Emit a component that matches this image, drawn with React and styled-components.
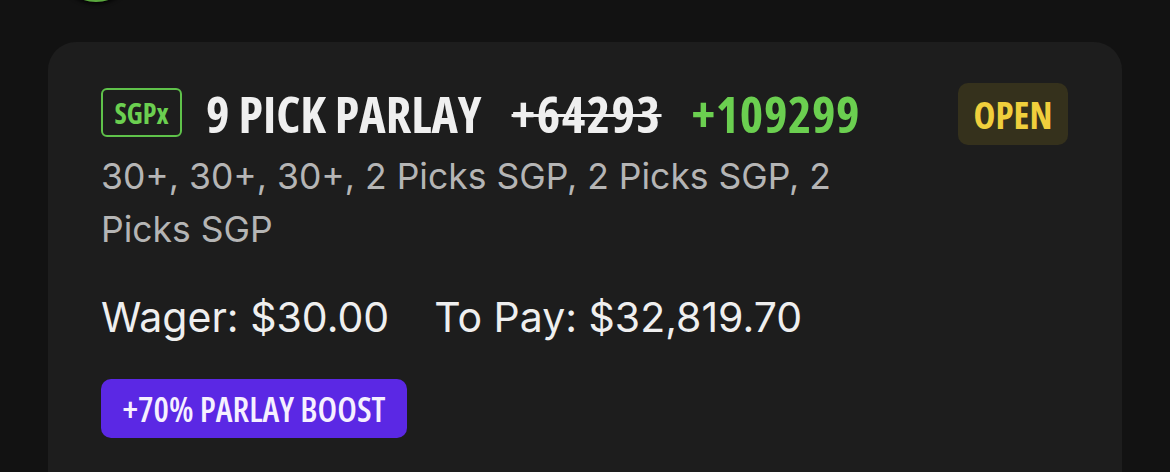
import styled, { createGlobalStyle } from "styled-components"

const GlobalStyle = createGlobalStyle`
  html, body {
    margin: 0;
    padding: 0;
    background: #121212;
    overflow: hidden;
  }
  body {
    font-family: Inter, "Liberation Sans", sans-serif;
  }
`

const bet = {
  type: "SGPx",
  title: "9 PICK PARLAY",
  oldOdds: "+64293",
  odds: "+109299",
  status: "OPEN",
  legs: "30+, 30+, 30+, 2 Picks SGP, 2 Picks SGP, 2 Picks SGP",
  wager: "$30.00",
  toPay: "$32,819.70",
  boost: "+70% PARLAY BOOST",
}

export default function App() {
  return (
    <>
      <GlobalStyle />
      <Page>
        <TopBar>
          <Avatar />
        </TopBar>
        <Card>
          <HeaderRow>
            <TitleGroup>
              <TypeBadge>{bet.type}</TypeBadge>
              <Title>{bet.title}</Title>
              <OldOdds>{bet.oldOdds}</OldOdds>
              <Odds>{bet.odds}</Odds>
            </TitleGroup>
            <Status>{bet.status}</Status>
          </HeaderRow>
          <Legs>{bet.legs}</Legs>
          <Amounts>
            <span>Wager: {bet.wager}</span>
            <span>To Pay: {bet.toPay}</span>
          </Amounts>
          <Boost>{bet.boost}</Boost>
        </Card>
      </Page>
    </>
  )
}

const condensed = `
  font-family: "Open Sans", sans-serif;
  font-stretch: 75%;
  font-weight: 700;
`

const Page = styled.div`
  padding: 0 48px;
  height: 472px;
`
const TopBar = styled.div`
  height: 42px;
  display: flex;
  align-items: flex-start;
`
const Avatar = styled.div`
  width: 76px;
  height: 76px;
  flex-shrink: 0;
  margin: -74px 0 0 10px;
  box-sizing: border-box;
  border-radius: 50%;
  background: #2c4a22;
  border: 3px solid #5aa83e;
  box-shadow: 0 2px 4px rgba(0, 0, 0, 0.9);
`
const Card = styled.div`
  background: #1d1d1d;
  border-radius: 28px 28px 0 0;
  padding: 41px 54px 80px 53px;
  display: flex;
  flex-direction: column;
  color: #eeeeee;
`
const HeaderRow = styled.div`
  display: flex;
  align-items: center;
  justify-content: space-between;
  height: 62px;
`
const TitleGroup = styled.div`
  display: flex;
  align-items: center;
  white-space: nowrap;
  ${condensed}
`
const TypeBadge = styled.div`
  border: 2px solid #5fc24a;
  border-radius: 6px;
  color: #6bcf50;
  font-size: 28px;
  height: 49px;
  width: 81px;
  box-sizing: border-box;
  display: flex;
  align-items: center;
  justify-content: center;
  margin: -3px 24px 0 0;
`
const Title = styled.span`
  font-size: 50px;
  line-height: 62px;
  color: #efefef;
  margin-right: 30px;
`
const OldOdds = styled(Title)`
  letter-spacing: 1.5px;
  text-decoration: line-through;
  text-decoration-thickness: 3px;
`
const Odds = styled(Title)`
  letter-spacing: 0.6px;
  color: #6bcf50;
  margin-right: 0;
`
const Status = styled.div`
  background: #35311c;
  border-radius: 10px;
  color: #f0cf3c;
  ${condensed}
  font-size: 37px;
  width: 110px;
  height: 62px;
  display: flex;
  align-items: center;
  justify-content: center;
`
const Legs = styled.p`
  margin: 5px 0 0;
  max-width: 770px;
  font-size: 35.5px;
  line-height: 53px;
  color: #b5b5b5;
`
const Amounts = styled.div`
  display: flex;
  gap: 45px;
  margin-top: 37px;
  font-size: 41px;
  line-height: 48px;
  color: #efefef;
`
const Boost = styled.div`
  align-self: flex-start;
  margin-top: 38px;
  background: #5b28e4;
  border-radius: 10px;
  height: 59px;
  width: 306px;
  box-sizing: border-box;
  display: flex;
  align-items: center;
  justify-content: center;
  color: #f6f0ff;
  ${condensed}
  font-weight: 600;
  font-size: 34.5px;
`
